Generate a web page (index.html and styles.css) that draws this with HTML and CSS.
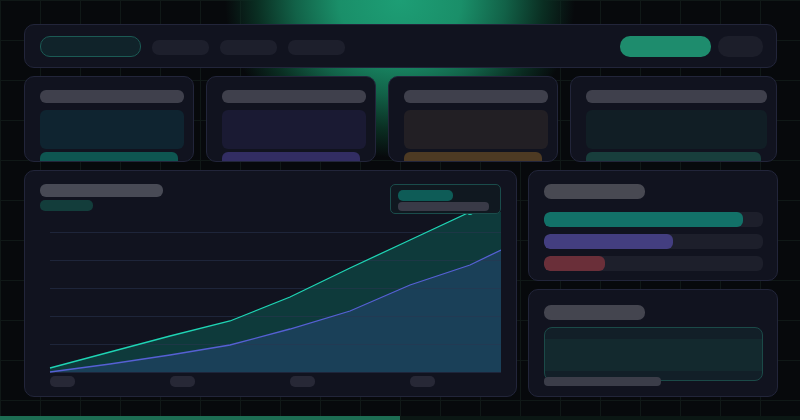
FILE: index.html
```html
<!DOCTYPE html>
<html lang="en">
<head>
<meta charset="utf-8">
<title>Dashboard</title>
<link rel="stylesheet" href="styles.css">
</head>
<body>
<div class="page">
  <header class="topbar">
    <div class="brand"></div>
    <nav class="nav">
      <span class="nav-item"></span>
      <span class="nav-item"></span>
      <span class="nav-item"></span>
    </nav>
    <div class="actions">
      <span class="btn-primary"></span>
      <span class="btn-ghost"></span>
    </div>
  </header>

  <section class="stats">
    <div class="stat stat-teal"><div class="stat-title"></div><div class="stat-body"></div><div class="stat-bar"></div></div>
    <div class="stat stat-indigo"><div class="stat-title"></div><div class="stat-body"></div><div class="stat-bar"></div></div>
    <div class="stat stat-amber"><div class="stat-title"></div><div class="stat-body"></div><div class="stat-bar"></div></div>
    <div class="stat stat-slate"><div class="stat-title"></div><div class="stat-body"></div><div class="stat-bar"></div></div>
  </section>

  <section class="main">
    <div class="panel chart-panel">
      <div class="chart-title"></div>
      <div class="chart-sub"></div>
      <svg class="chart" width="461" height="176" viewBox="40 212 461 176">
        <polygon class="fill-green" points="50,368 110,352 170,336 230,321 290,297 350,268 410,240 470,212 501,197 501,372 50,372"/>
        <polygon class="fill-blue" points="50,372 110,364 170,355 230,345 290,329 350,311 410,285 470,265 501,250 501,372 50,372"/>
        <g class="grid">
          <line x1="50" y1="232.5" x2="501" y2="232.5"/>
          <line x1="50" y1="260.5" x2="501" y2="260.5"/>
          <line x1="50" y1="288.5" x2="501" y2="288.5"/>
          <line x1="50" y1="316.5" x2="501" y2="316.5"/>
          <line x1="50" y1="344.5" x2="501" y2="344.5"/>
          <line x1="50" y1="372.5" x2="501" y2="372.5"/>
        </g>
        <polyline class="line-blue" points="50,372 110,364 170,355 230,345 290,329 350,311 410,285 470,265 501,250"/>
        <polyline class="line-green" points="50,368 110,352 170,336 230,321 290,297 350,268 410,240 470,212 501,197"/>
        <circle class="dot" cx="470" cy="212" r="3"/>
        <g class="ticks">
          <rect x="50" y="376" width="25" height="11" rx="5"/>
          <rect x="170" y="376" width="25" height="11" rx="5"/>
          <rect x="290" y="376" width="25" height="11" rx="5"/>
          <rect x="410" y="376" width="25" height="11" rx="5"/>
        </g>
      </svg>
      <div class="tooltip">
        <div class="tip-a"></div>
        <div class="tip-b"></div>
      </div>
    </div>

    <aside class="side">
      <div class="panel bars-panel">
        <div class="side-title"></div>
        <div class="tracks">
          <div class="track"><div class="fill fill-1" style="width:91%"></div></div>
          <div class="track"><div class="fill fill-2" style="width:59%"></div></div>
          <div class="track"><div class="fill fill-3" style="width:28%"></div></div>
        </div>
      </div>
      <div class="panel note-panel">
        <div class="side-title"></div>
        <div class="note-box"></div>
        <div class="note-bar"></div>
      </div>
    </aside>
  </section>

  <div class="progress"><div class="progress-fill" style="width:50%"></div></div>
</div>
</body>
</html>
```

FILE: styles.css
```css
* { box-sizing: border-box; }

html, body {
  margin: 0;
  width: 800px;
  height: 420px;
  overflow: hidden;
}

body {
  font-family: "Inter", "Liberation Sans", sans-serif;
  background-color: #07090c;
  background-image:
    radial-gradient(ellipse 175px 158px at 400px 0, #1d9e75 0%, #1a8f69 35%, #126248 60%, #0a2e22 82%, rgba(7, 9, 12, 0) 100%),
    linear-gradient(to right, #101817 1px, transparent 1px),
    linear-gradient(to bottom, #101817 1px, transparent 1px);
  background-size: 800px 420px, 40px 40px, 40px 40px;
  background-repeat: no-repeat, repeat, repeat;
}

.page {
  height: 420px;
  display: flex;
  flex-direction: column;
  padding: 24px 23px 0 24px;
}

/* top bar */
.topbar {
  height: 44px;
  flex: none;
  display: flex;
  align-items: center;
  padding: 0 13px 0 15px;
  background: #11131f;
  border: 1px solid #22253a;
  border-radius: 10px;
}

.brand {
  width: 101px;
  height: 21px;
  border-radius: 10px;
  background: #10232a;
  border: 1px solid #1b5a54;
}

.nav {
  display: flex;
  gap: 11px;
  margin-left: 11px;
  margin-top: 2px;
}

.nav-item {
  width: 57px;
  height: 15px;
  border-radius: 7px;
  background: #1d1f2c;
}

.actions {
  margin-left: auto;
  display: flex;
  gap: 7px;
}

.btn-primary {
  width: 91px;
  height: 21px;
  border-radius: 10px;
  background: #1e8c6d;
}

.btn-ghost {
  width: 45px;
  height: 21px;
  border-radius: 10px;
  background: #1c1e2a;
}

/* stat cards */
.stats {
  margin-top: 8px;
  height: 86px;
  flex: none;
  display: grid;
  grid-template-columns: 170px 170px 170px 1fr;
  column-gap: 12px;
}

.stat {
  background: #11131f;
  border: 1px solid #22253a;
  border-radius: 10px;
  padding: 13px 9px 0 15px;
  overflow: hidden;
}

.stat-title {
  height: 13px;
  border-radius: 6px;
  background: #3f404c;
}

.stat-body {
  margin-top: 7px;
  height: 39px;
  border-radius: 6px;
}

.stat-bar {
  margin-top: 3px;
  width: calc(100% - 6px);
  height: 14px;
  border-radius: 6px;
}

.stat-teal .stat-body { background: #0f2430; }
.stat-teal .stat-bar { background: #0e5651; }
.stat-indigo .stat-body { background: #1a1a33; }
.stat-indigo .stat-bar { background: #322d63; }
.stat-amber .stat-body { background: #221f24; }
.stat-amber .stat-bar { background: #4d3a23; }
.stat-slate .stat-body { background: #111e25; }
.stat-slate .stat-bar { background: #183e3c; }

/* main row */
.main {
  margin-top: 8px;
  height: 227px;
  flex: none;
  display: grid;
  grid-template-columns: 493px 250px;
  column-gap: 11px;
}

.panel {
  background: #11131f;
  border: 1px solid #22253a;
  border-radius: 10px;
}

.chart-panel {
  position: relative;
  padding: 13px 15px 0 15px;
}

.chart-title {
  width: 123px;
  height: 13px;
  border-radius: 6px;
  background: #484a55;
}

.chart-sub {
  margin-top: 3px;
  width: 53px;
  height: 11px;
  border-radius: 5px;
  background: #133d3b;
}

.chart {
  display: block;
  margin-top: 1px;
}

.fill-green { fill: #0e3a3b; }
.fill-blue { fill: #1a4058; }

.grid line {
  stroke: #2a3550;
  stroke-opacity: 0.55;
  stroke-width: 1;
  shape-rendering: crispEdges;
}

.line-green {
  fill: none;
  stroke: #1fd4b4;
  stroke-width: 1.3;
}

.line-blue {
  fill: none;
  stroke: #5660d4;
  stroke-width: 1.3;
}

.dot { fill: #1fd4b4; }

.ticks rect { fill: #272836; }

.tooltip {
  position: absolute;
  top: 13px;
  right: 15px;
  width: 111px;
  height: 30px;
  padding: 5px 0 0 7px;
  background: #101820;
  border: 1px solid #1a4c4b;
  border-radius: 5px;
}

.tip-a {
  width: 55px;
  height: 11px;
  border-radius: 5px;
  background: #0e5c57;
}

.tip-b {
  margin-top: 1px;
  width: 91px;
  height: 9px;
  border-radius: 4px;
  background: #393a47;
}

/* side column */
.side {
  display: flex;
  flex-direction: column;
  gap: 8px;
}

.bars-panel {
  height: 111px;
  flex: none;
  padding: 13px 14px 0 15px;
}

.side-title {
  width: 101px;
  height: 15px;
  border-radius: 7px;
  background: #484952;
}

.tracks {
  margin-top: 13px;
  display: flex;
  flex-direction: column;
  gap: 7px;
}

.track {
  height: 15px;
  border-radius: 6px;
  background: #1d1f2b;
  overflow: hidden;
}

.fill {
  height: 100%;
  border-radius: 6px;
}

.fill-1 { background: #127168; }
.fill-2 { background: #433e80; }
.fill-3 { background: #6a2f39; }

.note-panel {
  flex: 1;
  padding: 15px 14px 0 15px;
}

.note-panel .side-title { background: #44454f; }

.note-box {
  margin-top: 7px;
  height: 54px;
  border-radius: 8px;
  border: 1px solid #1b4a48;
  background: linear-gradient(to bottom, #121f28 0, #121f28 11px, #13292e 11px, #13292e 43px, #121f28 43px);
}

.note-bar {
  margin-top: -4px;
  width: 117px;
  height: 9px;
  border-radius: 4px;
  background: #3b3d49;
  position: relative;
}

/* bottom progress */
.progress {
  margin: auto -23px 0 -24px;
  height: 4px;
  flex: none;
  background: #0b1714;
}

.progress-fill {
  height: 100%;
  background: #1d6d53;
}
```
